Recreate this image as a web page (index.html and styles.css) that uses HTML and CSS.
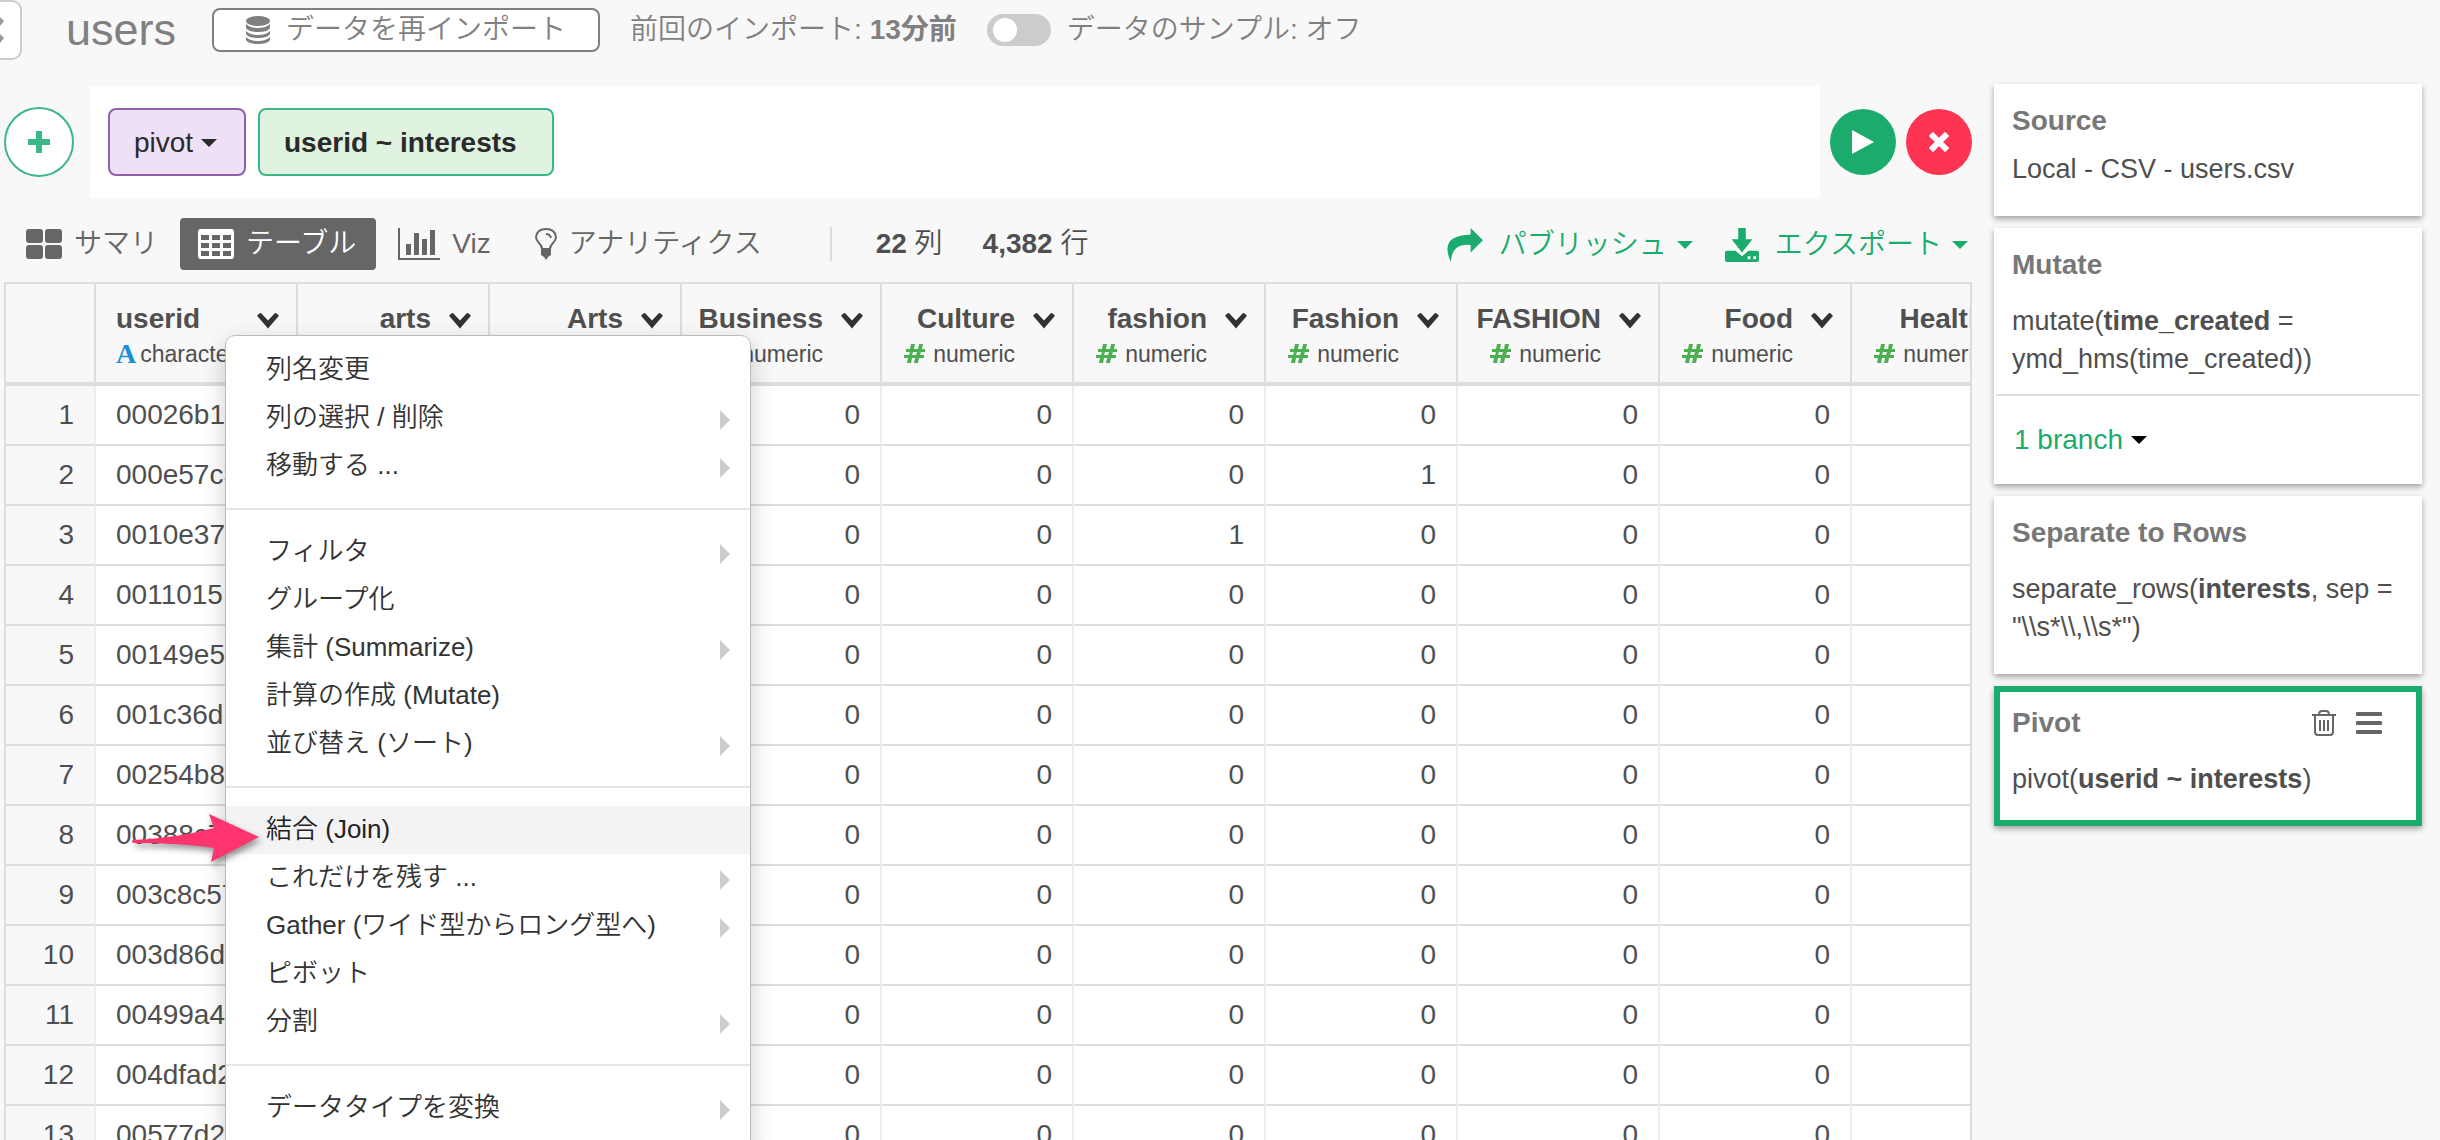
FILE: index.html
```html
<!DOCTYPE html>
<html lang="ja">
<head>
<meta charset="utf-8">
<title>users</title>
<link rel="stylesheet" href="styles.css">
</head>
<body>
<svg class="defs" width="0" height="0"><symbol id="hash" viewBox="0 0 21 19"><path d="M7 0h4L10 5h4L15 0h4l-1 5h3v3h-4l-1 3h4v3h-5l-1 5h-4l1-5H8l-1 5H3l1-5H0v-3h5l1-3H2V5h4zM9 8l-1 3h4l1-3z" fill="#4caf50"/></symbol></svg>
<header class="topbar">
  <button class="back" type="button" aria-label="戻る"><svg width="6" height="28" viewBox="0 0 6 28"><path d="M0 1L4 5L0 10ZM0 18L4 22L0 27Z" fill="#999"/></svg></button>
  <h1 class="title">users</h1>
  <button class="reimport" type="button">
    <svg width="24" height="28" viewBox="0 0 24 28" fill="#808080"><ellipse cx="12" cy="5" rx="12" ry="5"/><path d="M0 8q4 4 12 4t12-4v4q-2 4-12 4T0 12zM0 15q4 4 12 4t12-4v3q-2 4-12 4T0 18zM0 21q4 4 12 4t12-4v3q-2 4-12 4T0 24z"/></svg>
    データを再インポート
  </button>
  <p class="last">前回のインポート: <b>13分前</b></p>
  <label class="sample"><input class="switch" type="checkbox">データのサンプル: オフ</label>
</header>

<div class="layout">
  <main class="main">
    <div class="expression">
      <button class="round add" type="button" aria-label="追加"><svg width="22" height="22" viewBox="0 0 22 22"><path d="M11 2v18M2 11h18" stroke="#3cb786" stroke-width="6" stroke-linecap="square"/></svg></button>
      <div class="tokens">
        <button class="token verb" type="button">pivot<span class="caret"></span></button>
        <button class="token arg" type="button">userid ~ interests</button>
      </div>
      <button class="round run" type="button" aria-label="実行"><svg width="24" height="26" viewBox="0 0 24 26"><path d="M1 1l22 12L1 25z" fill="#fff"/></svg></button>
      <button class="round cancel" type="button" aria-label="キャンセル"><svg width="20" height="20" viewBox="0 0 20 20"><path d="M4 4l12 12M16 4L4 16" stroke="#fff" stroke-width="6" stroke-linecap="square"/></svg></button>
    </div>

    <div class="toolbar">
      <nav class="tabs">
        <button class="tab" type="button"><svg width="36" height="30" viewBox="0 0 36 30" fill="#666"><rect width="17" height="14" rx="3"/><rect x="19" width="17" height="14" rx="3"/><rect y="16" width="17" height="14" rx="3"/><rect x="19" y="16" width="17" height="14" rx="3"/></svg>サマリ</button>
        <button class="tab active" type="button"><svg width="36" height="30" viewBox="0 0 36 30"><rect width="36" height="30" rx="3" fill="#fff"/><path d="M3 6h8v5H3zM14 6h8v5h-8zM25 6h8v5h-8zM3 14h8v5H3zM14 14h8v5h-8zM25 14h8v5h-8zM3 22h8v5H3zM14 22h8v5h-8zM25 22h8v5h-8z" fill="#666"/></svg>テーブル</button>
        <button class="tab" type="button"><svg width="42" height="32" viewBox="0 0 42 32" fill="#666"><path d="M0 0h2v30h40v2H0zM8 16h5v11H8zM16 5h5v22h-5zM24 11h5v16h-5zM32 2h5v25h-5z"/></svg>Viz</button>
        <button class="tab" type="button"><svg width="22" height="32" viewBox="0 0 22 32"><path d="M7 21q0-3-3-6-3-3-3-6 1-8 10-8t10 8q0 3-3 6t-3 6z" fill="none" stroke="#666" stroke-width="2"/><path d="M11 6q4 0 5 4" fill="none" stroke="#666" stroke-width="2"/><path d="M6 21h10v6l-3 2-2 3-2-3-3-2z" fill="#666"/></svg>アナリティクス</button>
      </nav>
      <div class="counts"><span><b>22</b> 列</span><span><b>4,382</b> 行</span></div>
      <div class="actions">
        <button class="action" type="button"><svg width="36" height="34" viewBox="0 0 38 36"><path d="M25 0l13 13-13 13v-8Q5 16 4 36-9 8 25 7z" fill="#1aab6d"/></svg>パブリッシュ<span class="caret"></span></button>
        <button class="action" type="button"><svg width="34" height="34" viewBox="0 0 36 36" fill="#1aab6d"><path d="M14 0h8v12h7L18 26 7 12h7z"/><path fill-rule="evenodd" d="M2 24h9l7 6 7-6h9q2 0 2 2v8q0 2-2 2H2q-2 0-2-2v-8q0-2 2-2zM24 30v3h3v-3zM30 30v3h3v-3z"/></svg>エクスポート<span class="caret"></span></button>
      </div>
    </div>

    <div class="grid-area">
      <div class="grid-frame">
        <table class="grid">
          <colgroup><col class="c-num"><col class="c-wide"><col><col><col class="c-business"><col><col><col><col class="c-wide"><col><col></colgroup>
          <thead>
            <tr>
              <td class="corner"></td>
              <th scope="col"><div class="head text"><div>userid<span class="type"><i class="char">A</i>character</span></div><button class="chev" type="button" aria-label="列メニュー"></button></div></th>
              <th scope="col"><div class="head"><div>arts<span class="type"><svg class="hash"><use href="#hash"/></svg>numeric</span></div><button class="chev" type="button" aria-label="列メニュー"></button></div></th>
              <th scope="col"><div class="head"><div>Arts<span class="type"><svg class="hash"><use href="#hash"/></svg>numeric</span></div><button class="chev" type="button" aria-label="列メニュー"></button></div></th>
              <th scope="col"><div class="head"><div>Business<span class="type"><svg class="hash"><use href="#hash"/></svg>numeric</span></div><button class="chev" type="button" aria-label="列メニュー"></button></div></th>
              <th scope="col"><div class="head"><div>Culture<span class="type"><svg class="hash"><use href="#hash"/></svg>numeric</span></div><button class="chev" type="button" aria-label="列メニュー"></button></div></th>
              <th scope="col"><div class="head"><div>fashion<span class="type"><svg class="hash"><use href="#hash"/></svg>numeric</span></div><button class="chev" type="button" aria-label="列メニュー"></button></div></th>
              <th scope="col"><div class="head"><div>Fashion<span class="type"><svg class="hash"><use href="#hash"/></svg>numeric</span></div><button class="chev" type="button" aria-label="列メニュー"></button></div></th>
              <th scope="col"><div class="head"><div>FASHION<span class="type"><svg class="hash"><use href="#hash"/></svg>numeric</span></div><button class="chev" type="button" aria-label="列メニュー"></button></div></th>
              <th scope="col"><div class="head"><div>Food<span class="type"><svg class="hash"><use href="#hash"/></svg>numeric</span></div><button class="chev" type="button" aria-label="列メニュー"></button></div></th>
              <th scope="col"><div class="head"><div>Health<span class="type"><svg class="hash"><use href="#hash"/></svg>numeric</span></div><button class="chev" type="button" aria-label="列メニュー"></button></div></th>
            </tr>
          </thead>
          <tbody>
            <tr><th scope="row">1</th><td>00026b1</td><td>0</td><td>0</td><td>0</td><td>0</td><td>0</td><td>0</td><td>0</td><td>0</td><td></td></tr>
            <tr><th scope="row">2</th><td>000e57c3</td><td>0</td><td>0</td><td>0</td><td>0</td><td>0</td><td>1</td><td>0</td><td>0</td><td></td></tr>
            <tr><th scope="row">3</th><td>0010e374</td><td>0</td><td>0</td><td>0</td><td>0</td><td>1</td><td>0</td><td>0</td><td>0</td><td></td></tr>
            <tr><th scope="row">4</th><td>0011015</td><td>0</td><td>0</td><td>0</td><td>0</td><td>0</td><td>0</td><td>0</td><td>0</td><td></td></tr>
            <tr><th scope="row">5</th><td>00149e5</td><td>0</td><td>0</td><td>0</td><td>0</td><td>0</td><td>0</td><td>0</td><td>0</td><td></td></tr>
            <tr><th scope="row">6</th><td>001c36d</td><td>0</td><td>0</td><td>0</td><td>0</td><td>0</td><td>0</td><td>0</td><td>0</td><td></td></tr>
            <tr><th scope="row">7</th><td>00254b8</td><td>0</td><td>0</td><td>0</td><td>0</td><td>0</td><td>0</td><td>0</td><td>0</td><td></td></tr>
            <tr><th scope="row">8</th><td>00388c7</td><td>0</td><td>0</td><td>0</td><td>0</td><td>0</td><td>0</td><td>0</td><td>0</td><td></td></tr>
            <tr><th scope="row">9</th><td>003c8c57</td><td>0</td><td>0</td><td>0</td><td>0</td><td>0</td><td>0</td><td>0</td><td>0</td><td></td></tr>
            <tr><th scope="row">10</th><td>003d86d</td><td>0</td><td>0</td><td>0</td><td>0</td><td>0</td><td>0</td><td>0</td><td>0</td><td></td></tr>
            <tr><th scope="row">11</th><td>00499a42</td><td>0</td><td>0</td><td>0</td><td>0</td><td>0</td><td>0</td><td>0</td><td>0</td><td></td></tr>
            <tr><th scope="row">12</th><td>004dfad2</td><td>0</td><td>0</td><td>0</td><td>0</td><td>0</td><td>0</td><td>0</td><td>0</td><td></td></tr>
            <tr><th scope="row">13</th><td>00577d2</td><td>0</td><td>0</td><td>0</td><td>0</td><td>0</td><td>0</td><td>0</td><td>0</td><td></td></tr>
          </tbody>
        </table>
      </div>

      <div class="menu">
        <ul>
          <li><button type="button">列名変更</button></li>
          <li><button class="sub" type="button">列の選択 / 削除</button></li>
          <li><button class="sub" type="button">移動する ...</button></li>
        </ul>
        <ul>
          <li><button class="sub" type="button">フィルタ</button></li>
          <li><button type="button">グループ化</button></li>
          <li><button class="sub" type="button">集計 (Summarize)</button></li>
          <li><button type="button">計算の作成 (Mutate)</button></li>
          <li><button class="sub" type="button">並び替え (ソート)</button></li>
        </ul>
        <ul>
          <li><button class="current" type="button">結合 (Join)</button></li>
          <li><button class="sub" type="button">これだけを残す ...</button></li>
          <li><button class="sub" type="button">Gather (ワイド型からロング型へ)</button></li>
          <li><button type="button">ピボット</button></li>
          <li><button class="sub" type="button">分割</button></li>
        </ul>
        <ul>
          <li><button class="sub" type="button">データタイプを変換</button></li>
        </ul>
      </div>

      <svg class="pointer" width="128" height="50" viewBox="0 0 128 50"><path d="M1 26Q45 24 82 14L77 0 127 23 79 48 82 34Q50 29 1 29Q-1 27 1 26z" fill="#fd346e"/></svg>
    </div>
  </main>

  <aside class="steps">
    <section class="card source">
      <h2>Source</h2>
      <p>Local - CSV - users.csv</p>
    </section>
    <section class="card">
      <h2>Mutate</h2>
      <p>mutate(<b>time_created</b> =<br>ymd_hms(time_created))</p>
      <div class="branch"><button type="button">1 branch<span class="caret"></span></button></div>
    </section>
    <section class="card">
      <h2>Separate to Rows</h2>
      <p>separate_rows(<b>interests</b>, sep =<br>"\\s*\\,\\s*")</p>
    </section>
    <section class="card selected">
      <div class="card-head">
        <h2>Pivot</h2>
        <button type="button" aria-label="削除"><svg width="24" height="26" viewBox="0 0 24 26" fill="none" stroke="#666" stroke-width="2"><path d="M0 5h24M7 5q0-4 3-4h4q3 0 3 4M3 5v17q0 3 3 3h12q3 0 3-3V5M8 10v11M12 10v11M16 10v11"/></svg></button>
        <button type="button" aria-label="メニュー"><svg width="26" height="22" viewBox="0 0 26 22" fill="#666"><rect width="26" height="4" rx="1"/><rect y="9" width="26" height="4" rx="1"/><rect y="18" width="26" height="4" rx="1"/></svg></button>
      </div>
      <p>pivot(<b>userid ~ interests</b>)</p>
    </section>
  </aside>
</div>
</body>
</html>
```

FILE: styles.css
```css
* { box-sizing: border-box; margin: 0; padding: 0; }

body {
  display: flex;
  flex-direction: column;
  height: 100vh;
  overflow: hidden;
  background: #f8f8f8;
  color: #4f4f4f;
  font: 350 28px/32px "Liberation Sans", "Noto Sans CJK JP", sans-serif;
}

b { font-weight: 700; }
button { font: inherit; color: inherit; background: none; border: 0; cursor: pointer; white-space: nowrap; }
svg { display: block; flex: none; }
ul { list-style: none; }

.defs { position: absolute; }
.caret { border: 8px solid transparent; border-top-color: currentColor; border-bottom: 0; }

/* Top bar */
.topbar { display: flex; align-items: center; height: 60px; flex: none; color: #808080; white-space: nowrap; }
.back {
  width: 22px;
  height: 60px;
  border: 2px solid #ccc;
  border-left: 0;
  border-radius: 0 10px 10px 0;
  background: #fff;
}
.title { margin-left: 44px; font-size: 45px; font-weight: 300; line-height: 52px; }
.reimport {
  display: flex;
  align-items: center;
  gap: 16px;
  height: 44px;
  margin-left: 36px;
  padding: 0 32px;
  border: 2px solid #808080;
  border-radius: 8px;
  background: #fff;
}
.last { margin-left: 30px; }
.sample { display: flex; align-items: center; gap: 16px; margin-left: 30px; }
.switch {
  appearance: none;
  width: 64px;
  height: 32px;
  padding: 4px 6px;
  border-radius: 16px;
  background: #ccc;
}
.switch::before { content: ""; display: block; width: 24px; height: 24px; border-radius: 50%; background: #fff; }

/* Page columns */
.layout {
  flex: 1;
  min-height: 0;
  display: grid;
  grid-template-columns: minmax(0, 1fr) 428px;
  gap: 22px;
  padding: 24px 18px 0 4px;
}
.main { display: flex; flex-direction: column; min-height: 0; padding-top: 2px; }

/* Expression bar */
.expression { display: flex; align-items: center; gap: 10px; flex: none; }
.round { display: flex; align-items: center; justify-content: center; width: 66px; height: 66px; border-radius: 50%; flex: none; }
.add { width: 70px; height: 70px; margin-right: 6px; border: 2px solid #3cb786; background: #fff; }
.run { background: #1aab6d; }
.cancel { background: #fd3452; }
.tokens { flex: 1; display: flex; gap: 12px; padding: 22px 18px; background: #fff; }
.token { display: flex; align-items: center; gap: 8px; height: 68px; padding: 2px 24px 0; border: 2px solid; border-radius: 8px; color: #2a2a2a; }
.verb { width: 138px; background: #eee0f7; border-color: #8f61ad; }
.arg { width: 296px; background: #dff3e0; border-color: #3cb786; font-weight: 700; }

/* Toolbar */
.toolbar { display: flex; align-items: center; flex: none; margin: 20px 0 12px; white-space: nowrap; }
.tabs { display: flex; color: #666; }
.tab { display: flex; align-items: center; gap: 12px; height: 52px; padding: 0 22px; }
.tab.active { padding: 0 20px 0 18px; border-radius: 4px; background: #666; color: #fff; }
.counts { display: flex; gap: 40px; margin-left: 46px; padding-left: 44px; border-left: 2px solid #ddd; line-height: 34px; }
.actions { display: flex; gap: 32px; margin-left: auto; padding: 2px 4px 0 0; color: #1aab6d; }
.action { display: flex; align-items: center; gap: 16px; }
.action .caret { margin-left: -6px; }

/* Data grid */
.grid-area { position: relative; flex: 1; min-height: 0; overflow: hidden; }
.grid-frame { height: 100%; overflow: hidden; border: 2px solid #ddd; border-bottom: 0; background: #fff; }
.grid { width: 2038px; table-layout: fixed; border-collapse: separate; border-spacing: 0; }
.grid col { width: 192px; }
.grid .c-num { width: 90px; }
.grid .c-wide { width: 202px; }
.grid .c-business { width: 200px; }
.grid thead td, .grid thead th {
  height: 102px;
  padding: 6px 17px 0 0;
  border-right: 2px solid #ddd;
  border-bottom: 4px solid #ddd;
  background: #f8f8f8;
  font-weight: 700;
}
.head { display: flex; justify-content: flex-end; gap: 18px; text-align: right; }
.head.text { justify-content: space-between; padding-left: 20px; text-align: left; }
.type { display: flex; align-items: center; justify-content: flex-end; gap: 8px; margin-top: 3px; font-size: 23px; font-weight: 300; }
.text .type { justify-content: flex-start; gap: 4px; }
.hash { width: 21px; height: 19px; }
.char { color: #1b8fd6; font: 700 28px/32px "Liberation Serif", serif; }
.chev { width: 22px; height: 32px; }
.chev::before {
  content: "";
  display: block;
  height: 16px;
  margin-top: 4px;
  background: #333;
  clip-path: polygon(0 20%, 16% 0, 50% 50%, 84% 0, 100% 20%, 50% 100%);
}
.grid tbody td, .grid tbody th {
  height: 60px;
  padding: 0 20px;
  border-right: 2px solid #eee;
  border-bottom: 2px solid #ddd;
  font-weight: 300;
  text-align: right;
}
.grid tbody th { background: #f8f8f8; }
.grid tbody th + td { text-align: left; }

/* Column menu */
.menu {
  position: absolute;
  left: 221px;
  top: 53px;
  width: 526px;
  padding: 10px 0 20px;
  border: 1px solid #bbb;
  border-radius: 10px;
  background: #fff;
  box-shadow: 0 8px 24px rgba(0, 0, 0, .2);
  color: #333;
  font-size: 26px;
}
.menu ul + ul { margin-top: 18px; padding-top: 18px; border-top: 2px solid #e5e5e5; }
.menu button { display: flex; align-items: center; justify-content: space-between; width: 100%; height: 48px; padding: 0 20px 2px 40px; }
.menu .sub::after {
  content: "";
  margin-top: 6px;
  border: 10px solid transparent;
  border-left-color: #ccc;
  border-right: 0;
}
.menu .current { background: #f3f3f3; color: #222; }
.pointer { position: absolute; left: 128px; top: 532px; overflow: visible; filter: drop-shadow(2px 4px 3px rgba(0, 0, 0, .4)); }

/* Steps */
.steps { display: flex; flex-direction: column; gap: 12px; }
.card { padding: 21px 0 28px 18px; background: #fff; box-shadow: 0 3px 6px rgba(0, 0, 0, .35); }
.card h2 { color: #777; font-size: 28px; line-height: 32px; }
.card p { margin-top: 21px; font-size: 27px; line-height: 38px; white-space: nowrap; }
.card.source p { margin-top: 13px; }
.branch { display: flex; align-items: center; height: 90px; margin: 16px 2px -28px -16px; padding-left: 18px; border-top: 2px solid #ddd; }
.branch button { display: flex; align-items: center; gap: 8px; color: #1aab6d; }
.branch .caret { color: #000; }
.card.selected { padding: 15px 0 22px 12px; border: 6px solid #1aab6d; }
.card-head { display: flex; align-items: center; gap: 20px; padding-right: 34px; }
.card-head h2 { margin-right: auto; }
```
